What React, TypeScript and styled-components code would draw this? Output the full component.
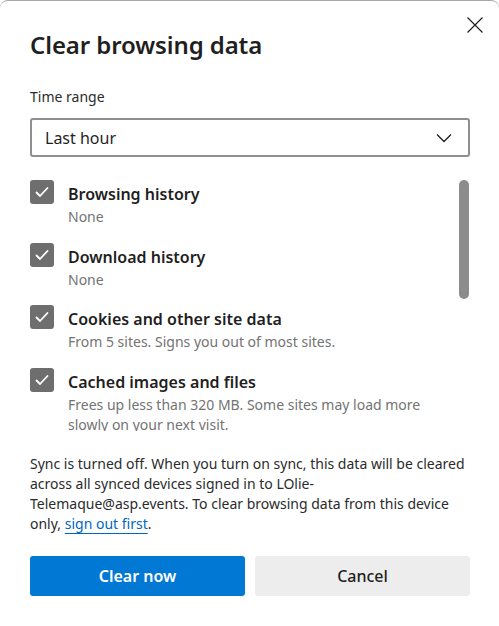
import React from "react";
import styled, { createGlobalStyle } from "styled-components";

const Global = createGlobalStyle`
  html, body { margin: 0; padding: 0; background: #ffffff; }
  body { font-family: "Segoe UI", "Noto Sans", "Open Sans", sans-serif; color: #1b1b1b; }
  * { box-sizing: border-box; }
`;

const Dialog = styled.div`
  position: relative;
  width: 499px;
  height: 626px;
  background: #ffffff;
  border-top: 1px solid #a8a8a8;
  border-radius: 8px;
  padding: 28px 29px 0 30px;
  display: flex;
  flex-direction: column;
  overflow: hidden;
`;

const Close = styled.button`
  position: absolute;
  top: 14px;
  right: 14px;
  width: 20px;
  height: 20px;
  padding: 0;
  border: none;
  background: transparent;
  display: flex;
  align-items: center;
  justify-content: center;
`;

const Title = styled.h1`
  margin: 0;
  font-size: 24px;
  font-weight: 600;
  line-height: 32px;
  color: #1f1f1f;
  letter-spacing: -0.1px;
`;

const Label = styled.div`
  margin-top: 26px;
  font-size: 14px;
  line-height: 20px;
  color: #2b2b2b;
`;

const Select = styled.div`
  margin-top: 11px;
  height: 39px;
  width: 440px;
  border: 2px solid #8f8f8f;
  border-radius: 3px;
  display: flex;
  align-items: center;
  justify-content: space-between;
  padding: 0 16px 0 13px;
  font-size: 16px;
  color: #1f1f1f;
`;

const ListArea = styled.div`
  margin-top: 23px;
  height: 251px;
  overflow: hidden;
  display: flex;
`;

const List = styled.div`
  flex: 1;
  display: flex;
  flex-direction: column;
  gap: 15.5px;
`;

const Item = styled.div`
  display: flex;
  gap: 14px;
  align-items: flex-start;
`;

const Box = styled.div`
  flex: none;
  width: 24px;
  height: 24px;
  border-radius: 3px;
  background: #6e6e6e;
  display: flex;
  align-items: center;
  justify-content: center;
`;

const Texts = styled.div`
  display: flex;
  flex-direction: column;
  margin-top: 2px;
`;

const ItemTitle = styled.div`
  font-size: 16px;
  font-weight: 600;
  line-height: 24px;
  color: #1f1f1f;
`;

const ItemSub = styled.div`
  margin-top: 1px;
  font-size: 14px;
  line-height: 20px;
  color: #737373;
  max-width: 370px;
`;

const Track = styled.div`
  flex: none;
  width: 10px;
  margin-right: 1px;
  display: flex;
  flex-direction: column;
`;

const Thumb = styled.div`
  width: 10px;
  height: 119px;
  border-radius: 5px;
  background: #8c8c8c;
`;

const Sync = styled.p`
  margin: 23px 0 0 0;
  font-size: 14px;
  line-height: 20px;
  color: #2b2b2b;
  width: 440px;
`;

const Link = styled.a`
  color: #0067c0;
  text-decoration: underline;
  text-underline-offset: 4px;
`;

const Buttons = styled.div`
  margin-top: 22px;
  display: grid;
  grid-template-columns: 215px 215px;
  gap: 10px;
`;

const Btn = styled.button<{ $primary?: boolean }>`
  height: 40px;
  border: none;
  border-radius: 3px;
  font-family: inherit;
  font-size: 16px;
  font-weight: ${(p) => (p.$primary ? 600 : 500)};
  background: ${(p) => (p.$primary ? "#0078d4" : "#ededed")};
  color: ${(p) => (p.$primary ? "#ffffff" : "#1f1f1f")};
`;

const Check = () => (
  <svg width="16" height="16" viewBox="0 0 16 16">
    <path d="M2.5 8.5 L6 12 L13.5 4" fill="none" stroke="#ffffff" strokeWidth="1.8" strokeLinecap="round" strokeLinejoin="round" />
  </svg>
);

const items = [
  { t: "Browsing history", s: "None" },
  { t: "Download history", s: "None" },
  { t: "Cookies and other site data", s: "From 5 sites. Signs you out of most sites." },
  { t: "Cached images and files", s: "Frees up less than 320 MB. Some sites may load more slowly on your next visit." },
];

export default function App() {
  return (
    <>
      <Global />
      <Dialog>
        <Close aria-label="Close">
          <svg width="18" height="18" viewBox="0 0 18 18">
            <path d="M1.5 1.5 L16.5 16.5 M16.5 1.5 L1.5 16.5" stroke="#1f1f1f" strokeWidth="1.2" />
          </svg>
        </Close>
        <Title>Clear browsing data</Title>
        <Label>Time range</Label>
        <Select>
          <span>Last hour</span>
          <svg width="16" height="10" viewBox="0 0 16 10">
            <path d="M1 1.5 L8 8.5 L15 1.5" fill="none" stroke="#1f1f1f" strokeWidth="1.3" />
          </svg>
        </Select>
        <ListArea>
          <List>
            {items.map((it) => (
              <Item key={it.t}>
                <Box>
                  <Check />
                </Box>
                <Texts>
                  <ItemTitle>{it.t}</ItemTitle>
                  <ItemSub>{it.s}</ItemSub>
                </Texts>
              </Item>
            ))}
          </List>
          <Track>
            <Thumb />
          </Track>
        </ListArea>
        <Sync>
          Sync is turned off. When you turn on sync, this data will be cleared across all synced devices signed in to LOlie-Telemaque@asp.events. To clear browsing data from this device only, <Link href="#">sign out first</Link>.
        </Sync>
        <Buttons>
          <Btn $primary>Clear now</Btn>
          <Btn>Cancel</Btn>
        </Buttons>
      </Dialog>
    </>
  );
}
